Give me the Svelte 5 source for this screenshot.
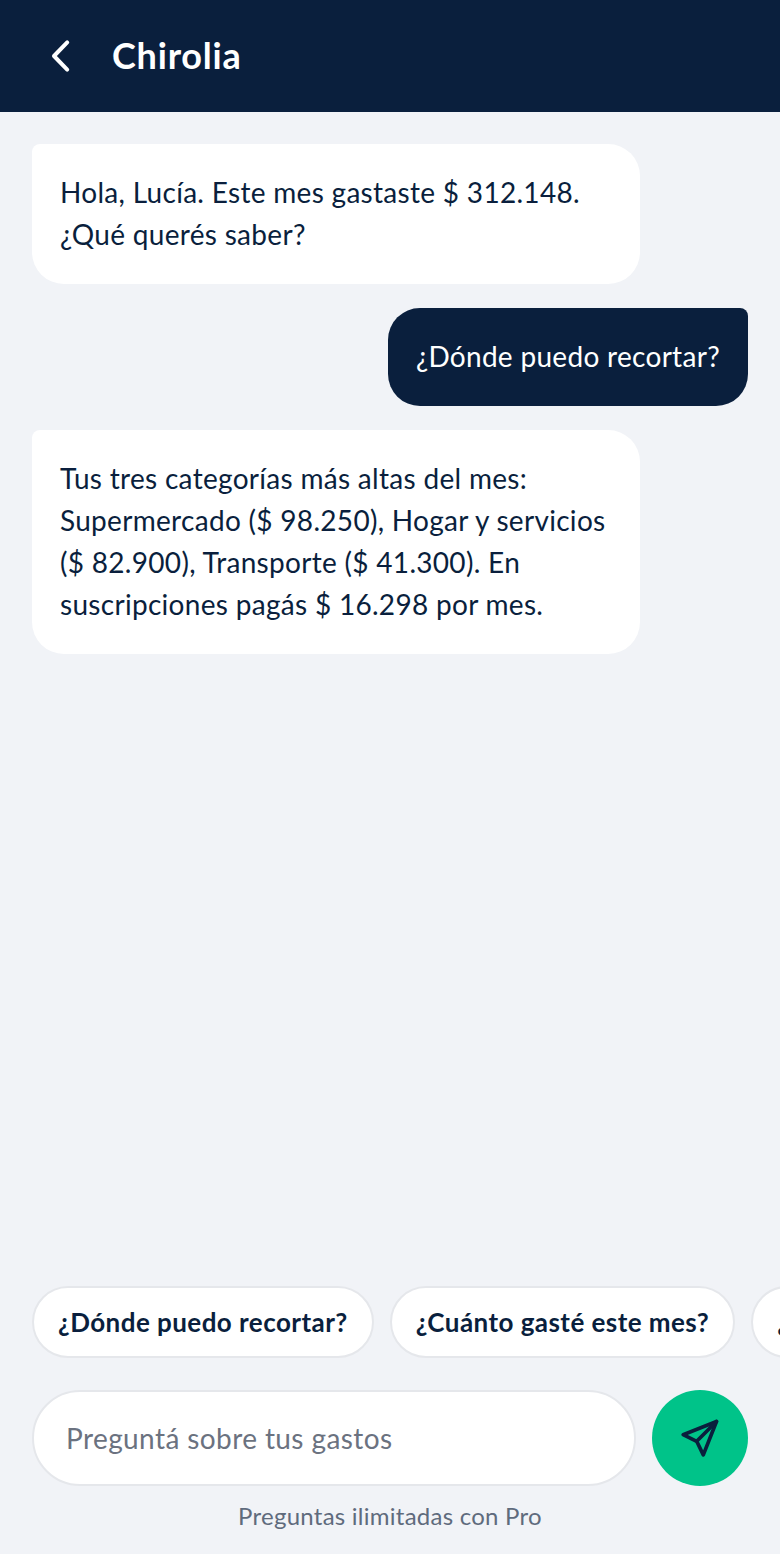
<script>
  const messages = [
    { from: 'bot', text: 'Hola, Lucía. Este mes gastaste $ 312.148. ¿Qué querés saber?' },
    { from: 'me', text: '¿Dónde puedo recortar?' },
    { from: 'bot', text: 'Tus tres categorías más altas del mes: Supermercado ($ 98.250), Hogar y servicios ($ 82.900), Transporte ($ 41.300). En suscripciones pagás $ 16.298 por mes.' }
  ];

  const suggestions = ['¿Dónde puedo recortar?', '¿Cuánto gasté este mes?', '¿Qué suscripciones tengo?'];
</script>

<div class="screen">
  <header class="topbar">
    <button class="back" aria-label="Volver">
      <svg width="48" height="48" viewBox="0 0 24 24" fill="none" stroke="#fff" stroke-width="2" stroke-linecap="round" stroke-linejoin="round">
        <path d="M14.6 5.2 8 12l6.6 6.8" />
      </svg>
    </button>
    <h1>Chirolia</h1>
  </header>

  <main class="messages">
    {#each messages as msg}
      <div class="bubble {msg.from}">{msg.text}</div>
    {/each}
  </main>

  <div class="chips">
    {#each suggestions as s}
      <button class="chip">{s}</button>
    {/each}
  </div>

  <form class="composer" on:submit|preventDefault>
    <input placeholder="Preguntá sobre tus gastos" />
    <button class="send" type="submit" aria-label="Enviar">
      <svg width="44" height="44" viewBox="0 0 24 24" fill="none" stroke="#0a1f3d" stroke-width="2" stroke-linecap="round" stroke-linejoin="round">
        <path d="M21 3 2.8 10.2l7.4 3.6 3.6 7.4L21 3Z" />
        <path d="M21 3 10.2 13.8" />
      </svg>
    </button>
  </form>

  <p class="hint">Preguntas ilimitadas con Pro</p>
</div>

<style>
  :global(body) {
    margin: 0;
    background: #f1f3f7;
  }

  .screen {
    height: 1554px;
    display: flex;
    flex-direction: column;
    overflow: hidden;
    font-family: "Lato", "Liberation Sans", sans-serif;
    color: #0a1f3d;
  }

  .topbar {
    height: 112px;
    flex-shrink: 0;
    background: #0a1f3d;
    display: flex;
    align-items: center;
    gap: 24px;
    padding: 0 16px 0 36px;
  }

  .back {
    width: 52px;
    height: 48px;
    padding: 0;
    border: none;
    background: none;
  }

  .topbar h1 {
    margin: 0 0 2px;
    color: #fff;
    font-size: 36px;
    font-weight: 700;
    letter-spacing: 0.8px;
  }

  .messages {
    flex: 1;
    display: flex;
    flex-direction: column;
    gap: 24px;
    padding: 32px 32px 0;
  }

  .bubble {
    box-sizing: border-box;
    padding: 27px 28px 29px;
    font-size: 28px;
    line-height: 42px;
    letter-spacing: 0.3px;
    border-radius: 32px;
  }

  .bot {
    width: 608px;
    background: #fff;
    align-self: flex-start;
    border-top-left-radius: 8px;
  }

  .me {
    background: #0a1f3d;
    color: #fff;
    align-self: flex-end;
    border-top-right-radius: 8px;
  }

  .chips {
    display: flex;
    gap: 16px;
    padding: 0 32px;
    flex-shrink: 0;
  }

  .chip {
    flex-shrink: 0;
    height: 72px;
    padding: 0 24px;
    background: #fff;
    border: 2px solid #e5e7eb;
    border-radius: 36px;
    font: 700 26px "Lato", "Liberation Sans", sans-serif;
    letter-spacing: 0.45px;
    color: #0a1f3d;
  }

  .composer {
    display: flex;
    gap: 16px;
    padding: 32px 32px 0;
  }

  .composer input {
    flex: 1;
    min-width: 0;
    box-sizing: border-box;
    height: 96px;
    padding: 0 32px;
    background: #fff;
    border: 2px solid #e5e7eb;
    border-radius: 48px;
    font: 28px "Lato", "Liberation Sans", sans-serif;
    letter-spacing: 0.4px;
    color: #0a1f3d;
    outline: none;
  }

  .composer input::placeholder {
    color: #6b7280;
    opacity: 1;
  }

  .send {
    width: 96px;
    height: 96px;
    flex-shrink: 0;
    padding: 0;
    border: none;
    border-radius: 50%;
    background: #00c389;
    display: flex;
    align-items: center;
    justify-content: center;
  }

  .hint {
    margin: 0;
    height: 68px;
    padding-top: 12px;
    box-sizing: border-box;
    text-align: center;
    font-size: 24px;
    line-height: 36px;
    letter-spacing: 0.25px;
    color: #5f6b7d;
  }
</style>
